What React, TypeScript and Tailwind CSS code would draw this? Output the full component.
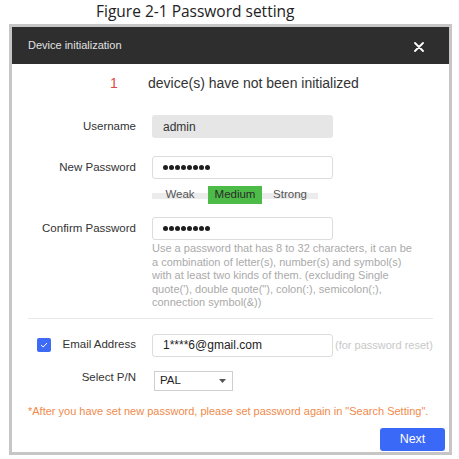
import React from 'react';

const labelCls = 'w-[124px] shrink-0 text-right text-[11.5px] text-[#333]';

const Field: React.FC<{ label: React.ReactNode; children: React.ReactNode; className?: string }> = ({
  label,
  children,
  className = '',
}) => (
  <div className={`flex items-center ${className}`}>
    <div className={labelCls}>{label}</div>
    <div className="ml-4 flex items-center">{children}</div>
  </div>
);

const Dots = () => (
  <div className="flex gap-[1.2px]">
    {[0, 1, 2, 3, 4, 5, 6, 7].map((i) => (
      <span key={i} className="w-[4.8px] h-[4.8px] rounded-full bg-[#1e1e1e]" />
    ))}
  </div>
);

export default function App() {
  return (
    <div className="w-[459px] h-[459px] bg-white font-['Liberation_Sans',Arial,sans-serif]">
      {/* Caption */}
      <div className="h-[24px] flex items-center pl-[96px] font-['Open_Sans',sans-serif] text-[15.5px] text-[#222]">
        Figure 2-1 Password setting
      </div>

      {/* Dialog */}
      <div className="ml-[9px] w-[443px] h-[431px] border-[3px] border-[#c6c6c6] flex flex-col">
        <div className="h-[37px] shrink-0 bg-[#2e2e2e] flex items-center justify-between pl-[16px] pr-[25px]">
          <span className="text-[11px] text-[#e2e2e2]">Device initialization</span>
          <svg width="10" height="10" viewBox="0 0 10 10" className="mt-[2px]">
            <path d="M1 1L9 9M9 1L1 9" stroke="#fff" strokeWidth="1.8" strokeLinecap="round" />
          </svg>
        </div>

        <div className="flex-1 flex flex-col">
          <div className="h-[38px] flex items-center text-[14px] text-[#333]">
            <span className="ml-[98px] w-[38px] text-[#e0474c]">1</span>
            <span>device(s) have not been initialized</span>
          </div>

          <Field label="Username" className="mt-[13px]">
            <div className="w-[181px] h-[23px] rounded-[3px] bg-[#e6e6e6] flex items-center px-[11px] text-[12px] text-[#333]">
              admin
            </div>
          </Field>

          <Field label="New Password" className="mt-[18px]">
            <div className="w-[181px] h-[23px] rounded-[3px] border border-[#dcdcdc] flex items-center px-[10px]">
              <Dots />
            </div>
          </Field>

          <div className="mt-[7px] ml-[140px] relative w-[166px] h-[18px] flex text-[11.5px] text-[#555]">
            <div className="absolute left-0 right-0 top-[7px] h-[6px] bg-[#ececec]" />
            <div className="relative w-[56px] flex items-center justify-center">Weak</div>
            <div className="relative w-[54px] flex items-center justify-center bg-[#4cbb47] text-[#2b2b2b]">Medium</div>
            <div className="relative w-[56px] flex items-center justify-center">Strong</div>
          </div>

          <Field label="Confirm Password" className="mt-[13px]">
            <div className="w-[181px] h-[23px] rounded-[3px] border border-[#dcdcdc] flex items-center px-[10px]">
              <Dots />
            </div>
          </Field>

          <div className="mt-[2px] ml-[140px] text-[11px] leading-[13.5px] text-[#aaaaaa]">
            Use a password that has 8 to 32 characters, it can be
            <br />
            a combination of letter(s), number(s) and symbol(s)
            <br />
            with at least two kinds of them. (excluding Single
            <br />
            quote('), double quote("), colon(:), semicolon(;),
            <br />
            connection symbol(&amp;))
          </div>

          <div className="mt-[8px] mx-[16px] h-px bg-[#e8e8e8]" />

          <div className="mt-[15px] flex items-center">
            <div className="w-[124px] shrink-0 flex items-center">
              <div className="ml-[25px] w-[14px] h-[14px] rounded-[2px] bg-[#3d6bf5] flex items-center justify-center">
                <svg width="8" height="6" viewBox="0 0 8 6">
                  <path d="M1 3L3.2 5L7 1" stroke="#fff" strokeWidth="1" fill="none" />
                </svg>
              </div>
              <span className="ml-auto text-[11.5px] text-[#333]">Email Address</span>
            </div>
            <div className="ml-4 w-[181px] h-[23px] rounded-[3px] border border-[#dcdcdc] flex items-center px-[10px] text-[12px] text-[#222]">
              1****6@gmail.com
            </div>
            <span className="ml-[2px] text-[11px] text-[#c8c8c8]">(for password reset)</span>
          </div>

          <Field label="Select P/N" className="mt-[9px]">
            <div className="ml-[2px] mt-[5px] w-[79px] h-[20px] border border-[#cfcfcf] flex items-center justify-between pl-[5px] pr-[6px] text-[11.5px] text-[#222]">
              <span>PAL</span>
              <svg width="7" height="4" viewBox="0 0 7 4">
                <path d="M0 0H7L3.5 4Z" fill="#555" />
              </svg>
            </div>
          </Field>

          <div className="mt-[12px] pl-[16px] text-[11px] leading-[16px] text-[#f08a4b] whitespace-nowrap">
            *After you have set new password, please set password again in "Search Setting".
          </div>

          <div className="mt-[9px] flex justify-end pr-[4px]">
            <button className="w-[65px] h-[23px] rounded-[3px] bg-[#3a68f7] text-white text-[12.5px]">Next</button>
          </div>
        </div>
      </div>
    </div>
  );
}
